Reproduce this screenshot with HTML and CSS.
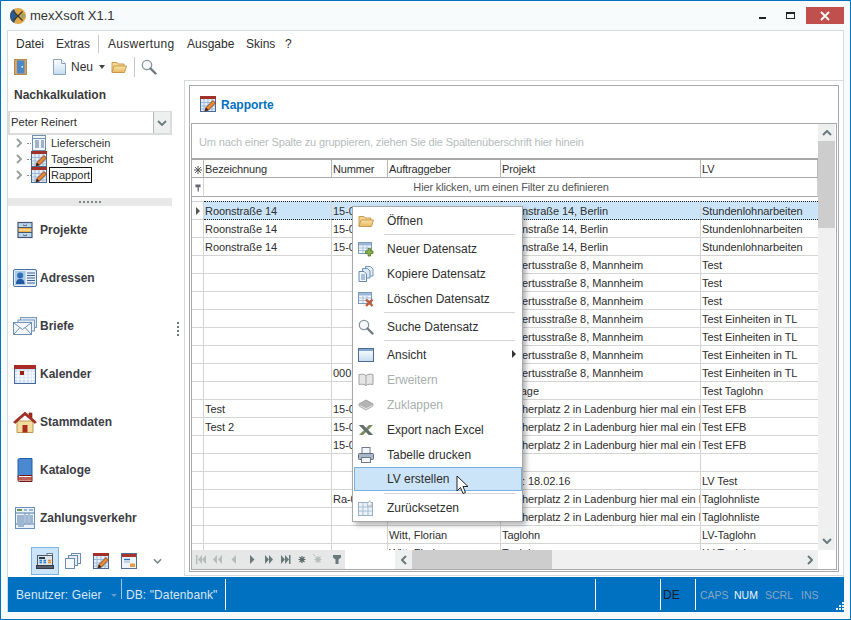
FILE: index.html
```html
<!DOCTYPE html>
<html lang="de">
<head>
<meta charset="utf-8">
<title>mexXsoft X1.1</title>
<link rel="stylesheet" href="styles.css">
</head>
<body>
<svg class="sprite" width="0" height="0" aria-hidden="true">
  <defs>
    <linearGradient id="gDoc" x1="0" y1="0" x2="0" y2="1"><stop offset="0" stop-color="#fff"/><stop offset="1" stop-color="#c4dcf0"/></linearGradient>
    <linearGradient id="gFold" x1="0" y1="0" x2="0" y2="1"><stop offset="0" stop-color="#fbe3a8"/><stop offset="1" stop-color="#e8b860"/></linearGradient>
    <symbol id="i-door" viewBox="0 0 16 16"><rect x="1.500" y="0.500" width="12" height="15" fill="#d7a468" stroke="#b98a50"/><rect x="4" y="1.500" width="7.500" height="13" fill="#4a88c8"/><rect x="8.500" y="7" width="1.500" height="1.500" fill="#fff"/></symbol>
    <symbol id="i-doc" viewBox="0 0 16 16"><path d="M2.500.5h8l4 4v11h-12z" fill="url(#gDoc)" stroke="#8aa4c0"/><path d="M10.500.5v4h4" fill="#fff" stroke="#8aa4c0"/></symbol>
    <symbol id="i-folder" viewBox="0 0 16 16"><path d="M1 13V3.500h5l1 1.500h6v2" fill="#f6d690" stroke="#c89a50"/><path d="M1 13.500l2-6.500h12.500l-2 6.500z" fill="url(#gFold)" stroke="#c89a50"/></symbol>
    <symbol id="i-search" viewBox="0 0 16 16"><circle cx="6" cy="6" r="4.700" fill="#f4f8fb" stroke="#8a949c" stroke-width="1.300"/><path d="M9.500 9.500l5 5" stroke="#707a82" stroke-width="2.400" stroke-linecap="round"/></symbol>
    <symbol id="i-form" viewBox="0 0 16 16"><rect x="1.500" y="0.500" width="13" height="15" fill="#f2f7fc" stroke="#6f8fb0"/><path d="M1.500 3.500h13" stroke="#6f8fb0"/><path d="M4 6h4M4 8h4M4 10h4M4 12h4M10 6h3M10 8h3M10 10h3M10 12h3" stroke="#4e6f92"/></symbol>
    <symbol id="i-rapport" viewBox="0 0 16 16"><rect x="0.500" y="0.500" width="15" height="15" fill="#e4eef8" stroke="#4a6a94"/><rect x="0" y="0" width="16" height="3" fill="#a03028"/><path d="M4 3v12M8 3v12M12 3v12M1 6.500h14M1 10h14M1 13h14" stroke="#9db9d8"/><path d="M5 15l1-3.500 7-7 2.500 2.500-7 7z" fill="#e88a30" stroke="#70301c" stroke-width=".8"/><path d="M5 15l1-3.500 2.500 2.500z" fill="#3a2010"/></symbol>
    <symbol id="i-cabinet" viewBox="0 0 16 16"><rect x="1" y="0.500" width="14" height="15" fill="#bcd6ee" stroke="#46566e" stroke-width="1.200"/><path d="M1 5.500h14M1 10.500h14" stroke="#46566e"/><rect x="2" y="6" width="12" height="4" fill="#f0b040"/><rect x="2" y="7.500" width="12" height="1" fill="#fff2c8"/><path d="M6.500 2.500v1h3v-1M6.500 12.500v1h3v-1" fill="none" stroke="#46566e" stroke-width=".8"/></symbol>
    <symbol id="i-card" viewBox="0 0 24 18"><rect x="0.500" y="0.500" width="23" height="17" rx="1.500" fill="#e6f0fa" stroke="#4a72a8"/><rect x="2" y="2" width="10.500" height="14" fill="#a9c9ea"/><circle cx="7.200" cy="6.500" r="3" fill="#2f6eb5"/><path d="M3 15c0-4 2-5 4.200-5s4.300 1 4.300 5z" fill="#2458a0"/><path d="M14 4h8M14 6.500h8M14 9h8M14 11.500h8M14 14h8" stroke="#3a5f90"/></symbol>
    <symbol id="i-mails" viewBox="0 0 24 18"><rect x="7.500" y="0.500" width="16" height="10" fill="#dfeaf6" stroke="#7898bc"/><rect x="5" y="3" width="16.500" height="11" fill="#e6eff8" stroke="#7898bc"/><rect x="0.500" y="5.500" width="18" height="12" fill="#f4f8fc" stroke="#7090b4"/><path d="M1 6l8.500 6.500L18 6M1 17l6-6.500M18 17l-6-6.500" fill="none" stroke="#7090b4"/></symbol>
    <symbol id="i-cal" viewBox="0 0 22 19"><rect x="0.500" y="0.500" width="21" height="18" fill="#cfe0f2" stroke="#46689a"/><rect x="0" y="0" width="22" height="4" fill="#a82c24"/><path d="M4 5v13M8 5v13M12 5v13M16 5v13M19 5v13M1 8h20M1 11h20M1 14h20" stroke="#fff"/><rect x="6" y="6" width="4" height="4" fill="#a01c18"/></symbol>
    <symbol id="i-house" viewBox="0 0 24 22"><path d="M4 10h16v11.500H4z" fill="#f4dc9c" stroke="#b89858"/><path d="M0.500 11L12 1l4 3.500V2h3v5.200L23.500 11l-1.500 1.500L12 4 2 12.500z" fill="#a82c20" stroke="#7a1c14" stroke-width=".6"/><rect x="9.500" y="14" width="5" height="7.500" fill="#a82c20"/></symbol>
    <symbol id="i-book" viewBox="0 0 16 24"><path d="M1 2q0-1.500 1.500-1.500H15v17H2.500Q1 17.500 1 19z" fill="#4a88d0" stroke="#1f5ea8"/><path d="M1 19v3.500q0 1 1.500 1H15v-6H2.500Q1 17.500 1 19z" fill="#fff" stroke="#701814"/><path d="M1 20h14M1 21.800h14" stroke="#a82c24" stroke-width="1.300"/></symbol>
    <symbol id="i-ledger" viewBox="0 0 20 22"><rect x="0.500" y="0.500" width="19" height="21" fill="#eaf2fb" stroke="#6a90ba"/><path d="M2 3h5" stroke="#6a9a50" stroke-width="2"/><path d="M9 3h3M14 3h4M1 6h18M2 9h7M2 11h7M2 13h7M2 15h7M11 9h2M11 11h2M11 13h2M11 15h2M15 9h3M15 11h3M15 13h3M15 15h3M1 17h18M3 19h6" stroke="#557ba6"/><path d="M10 6v11M14 6v11" stroke="#6a90ba"/></symbol>
    <symbol id="i-register" viewBox="0 0 18 16"><rect x="11" y="0.500" width="5.500" height="5" fill="#f8fbfe" stroke="#6a7a8c"/><rect x="1.500" y="2.500" width="15" height="10" fill="#dde4ea" stroke="#4c5864"/><rect x="3" y="4" width="6" height="2" fill="#2b3a48"/><path d="M3.500 7.500h2.500M7.500 7.500h2.500M3.500 9.500h2.500M7.500 9.500h2.500" stroke="#2e7ed0" stroke-width="1.300"/><path d="M12 7.500h3M12 9.500h3" stroke="#e09030" stroke-width="1.300"/><rect x="0.500" y="12.500" width="17" height="3" fill="#56606c" stroke="#333c46"/></symbol>
    <symbol id="i-copies" viewBox="0 0 16 16"><rect x="6.500" y="0.500" width="9" height="10" fill="#eef4fa" stroke="#6c8cb0"/><rect x="3.500" y="2.500" width="9" height="10" fill="#e6eff8" stroke="#6c8cb0"/><rect x="0.500" y="5.500" width="9" height="10" fill="#f6fafd" stroke="#6c8cb0"/></symbol>
    <symbol id="i-win" viewBox="0 0 16 16"><rect x="0.500" y="0.500" width="15" height="15" fill="#edf4fb" stroke="#4f6f96"/><rect x="1" y="1" width="14" height="3" fill="#a8342c"/><path d="M3 6.500h6" stroke="#2e74c4" stroke-width="1.400"/><path d="M3 9h6" stroke="#9ab0c8"/><rect x="9" y="10.500" width="5" height="3.500" fill="#e4a040"/></symbol>
    <symbol id="i-tplus" viewBox="0 0 16 16"><rect x="0.500" y="1.500" width="13" height="11" fill="#f2f7fc" stroke="#7e9ab8"/><rect x="1" y="2" width="12" height="2.500" fill="#9ab8d8"/><path d="M5 5v7M9 5v7M1 7h12M1 9.500h12" stroke="#a8c0d8"/><path d="M10 7.500h2.500V10H15v2.500h-2.500V15H10v-2.500H7.500V10H10z" fill="#8cb04c" stroke="#547828" stroke-width=".8"/></symbol>
    <symbol id="i-tcopy" viewBox="0 0 16 16"><path d="M7.500 0.500h5l2.500 2.500v7h-7.500z" fill="#e6eff8" stroke="#7294ba"/><path d="M4.500 2.500h5l2.500 2.500v7h-7.500z" fill="#dbe8f5" stroke="#7294ba"/><path d="M1 5.500h5l2.500 2.500v7.500H1z" fill="#f2f7fc" stroke="#6488b0"/><path d="M3 9h4M3 11h4M3 13h4" stroke="#6488b0"/></symbol>
    <symbol id="i-tx" viewBox="0 0 16 16"><rect x="0.500" y="1.500" width="13" height="11" fill="#f2f7fc" stroke="#7e9ab8"/><rect x="1" y="2" width="12" height="2.500" fill="#9ab8d8"/><path d="M5 5v7M9 5v7M1 7h12M1 9.500h12" stroke="#a8c0d8"/><path d="M8 8.500l6.500 6.500M14.500 8.500L8 15" stroke="#c05a38" stroke-width="2.400"/></symbol>
    <symbol id="i-panel" viewBox="0 0 16 14"><rect x="0.500" y="0.500" width="15" height="13" fill="url(#gDoc)" stroke="#4f6a8c"/><rect x="1" y="1" width="14" height="2" fill="#7fa6d0"/></symbol>
    <symbol id="i-bookopen" viewBox="0 0 16 14"><path d="M8 2.500C6 1 3.500 1 1 1.500v10c2.500-.5 5-.5 7 1 2-1.500 4.500-1.500 7-1V1.500C12.500 1 10 1 8 2.500z" fill="#e6e6e6" stroke="#a0a0a0"/><path d="M8 2.500v10" stroke="#a0a0a0"/></symbol>
    <symbol id="i-bookshut" viewBox="0 0 16 12"><path d="M8 1L1 5l7 3.500L15 5z" fill="#b4b4b4" stroke="#a0a0a0"/><path d="M1 5v2l7 4 7-4V5L8 8.500z" fill="#dcdcdc" stroke="#b0b0b0"/></symbol>
    <symbol id="i-excel" viewBox="0 0 16 12"><path d="M1 1h4l3 3 3-3h4l-5 5 5 5h-4L8 8l-3 3H1l5-5z" fill="#7a8a5c"/><path d="M1 1h4l10 10h-4z" fill="#5f6f70"/></symbol>
    <symbol id="i-printer" viewBox="0 0 16 16"><rect x="4" y="0.500" width="8" height="6" fill="#f4f7fa" stroke="#6e7c8c"/><rect x="0.500" y="6.500" width="15" height="6" rx="1" fill="#a8b8ca" stroke="#5c6a7a"/><rect x="3.500" y="10.500" width="9" height="5" fill="#f4f7fa" stroke="#6e7c8c"/></symbol>
    <symbol id="i-reset" viewBox="0 0 16 16"><rect x="0.500" y="2.500" width="14" height="13" fill="#edf2f8" stroke="#9ab0c8"/><path d="M5 3v12M10 3v12M1 7h13M1 11h13" stroke="#a8bed4"/><path d="M11.500 0.500l1 2 2.200.300-1.600 1.500.400 2.200-2-1-2 1 .400-2.200-1.600-1.500 2.200-.300z" fill="#f6f8fa" stroke="#9aa8b6" stroke-width=".7"/></symbol>
    <symbol id="i-chev" viewBox="0 0 7 10"><path d="M1 1l4 4-4 4" fill="none" stroke="#9aa0a0" stroke-width="2"/></symbol>
  </defs>
</svg>

<div class="window">
  <header class="titlebar">
    <svg class="app-logo" viewBox="0 0 16 16"><circle cx="8" cy="8" r="8" fill="#e0a848"/><path d="M0 8a8 8 0 0 1 4-7l3 7-3 7a8 8 0 0 1-4-7z" fill="#2c5a90"/><path d="M4 3l4 4 4-4 1 1-4 4 4 4-1 1-4-4-4 4-1-1 4-4-4-4z" fill="#3c3c30"/><circle cx="13" cy="8" r="2.200" fill="#98a468"/></svg>
    <span class="app-title">mexXsoft X1.1</span>
    <div class="win-btns">
      <span class="win-min"></span>
      <span class="win-max"></span>
      <span class="win-close"><svg width="10" height="10" viewBox="0 0 10 10"><path d="M1 1l8 8M9 1l-8 8" stroke="#fff" stroke-width="1.800"/></svg></span>
    </div>
  </header>

  <div class="client">
    <div class="topbars">
      <nav class="menubar">
        <span class="m m-datei">Datei</span>
        <span class="m m-extras">Extras</span>
        <span class="vsep menu-sep"></span>
        <span class="m m-ausw">Auswertung</span>
        <span class="m m-ausg">Ausgabe</span>
        <span class="m m-skins">Skins</span>
        <span class="m">?</span>
      </nav>
      <div class="toolbar">
        <svg class="ic16 tb-door"><use href="#i-door"/></svg>
        <svg class="ic16 tb-doc"><use href="#i-doc"/></svg>
        <span class="tb-neu">Neu</span>
        <span class="tb-caret"></span>
        <svg class="ic16 tb-folder"><use href="#i-folder"/></svg>
        <span class="vsep tb-sep"></span>
        <svg class="ic16 tb-search"><use href="#i-search"/></svg>
      </div>
    </div>

    <div class="workarea">
      <aside class="side">
        <h2 class="side-head">Nachkalkulation</h2>
        <div class="combo"><span class="combo-val">Peter Reinert</span><span class="combo-btn"><svg width="10" height="6" viewBox="0 0 10 6"><path d="M1 1l4 4 4-4" fill="none" stroke="#6a7a7a" stroke-width="1.800"/></svg></span></div>
        <ul class="tree">
          <li><svg class="tree-chev"><use href="#i-chev"/></svg><span class="tree-dots"></span><svg class="ic16"><use href="#i-form"/></svg><span class="tree-label">Lieferschein</span></li>
          <li><svg class="tree-chev"><use href="#i-chev"/></svg><span class="tree-dots"></span><svg class="ic16"><use href="#i-rapport"/></svg><span class="tree-label">Tagesbericht</span></li>
          <li><svg class="tree-chev"><use href="#i-chev"/></svg><span class="tree-dots"></span><svg class="ic16"><use href="#i-rapport"/></svg><span class="tree-label tree-focus">Rapport</span></li>
        </ul>
        <div class="splitter"><span></span><span></span><span></span><span></span><span></span><span></span></div>
        <ul class="navlist">
          <li><span class="nav-ic"><svg class="n16"><use href="#i-cabinet"/></svg></span>Projekte</li>
          <li><span class="nav-ic"><svg class="n24"><use href="#i-card"/></svg></span>Adressen</li>
          <li><span class="nav-ic"><svg class="n24"><use href="#i-mails"/></svg></span>Briefe<span class="grip"><i></i><i></i><i></i><i></i></span></li>
          <li><span class="nav-ic"><svg class="n22"><use href="#i-cal"/></svg></span>Kalender</li>
          <li><span class="nav-ic"><svg class="n24h"><use href="#i-house"/></svg></span>Stammdaten</li>
          <li><span class="nav-ic"><svg class="n16t"><use href="#i-book"/></svg></span>Kataloge</li>
          <li><span class="nav-ic"><svg class="n20"><use href="#i-ledger"/></svg></span>Zahlungsverkehr</li>
        </ul>
        <div class="navbtns">
          <span class="nb nb-on"><svg class="ic16 wide"><use href="#i-register"/></svg></span>
          <span class="nb"><svg class="ic16"><use href="#i-copies"/></svg></span>
          <span class="nb"><svg class="ic16"><use href="#i-rapport"/></svg></span>
          <span class="nb"><svg class="ic16"><use href="#i-win"/></svg></span>
          <span class="nb"><svg width="9" height="6" viewBox="0 0 10 6"><path d="M1 1l4 4 4-4" fill="none" stroke="#7a8a8a" stroke-width="1.800"/></svg></span>
        </div>
      </aside>

      <main class="main">
        <section class="frame">
          <div class="frame-title"><svg class="ic16"><use href="#i-rapport"/></svg><span>Rapporte</span></div>
          <div class="grid">
            <div class="grid-top">
              <div class="grid-left">
                <div class="group-panel">Um nach einer Spalte zu gruppieren, ziehen Sie die Spaltenüberschrift hier hinein</div>
                <table class="tbl">
                  <colgroup><col class="c0"><col class="c1"><col class="c2"><col class="c3"><col class="c4"><col class="c5"></colgroup>
                  <thead>
                    <tr class="hdr"><th><svg width="8" height="8" viewBox="0 0 9 9"><path d="M4.500 0v9M0 4.500h9M1.200 1.200l6.600 6.600M7.800 1.200L1.200 7.800" stroke="#555" stroke-width="1.100"/></svg></th><th>Bezeichnung</th><th>Nummer</th><th>Auftraggeber</th><th>Projekt</th><th>LV</th></tr>
                    <tr class="flt"><th><svg width="6" height="8" viewBox="0 0 7 9"><path d="M0.500 0.500h6v3h-2v5h-1.500v-5h-2.500z" fill="#667"/></svg></th><th colspan="5">Hier klicken, um einen Filter zu definieren</th></tr>
                    <tr class="gap"><td colspan="6"></td></tr>
                  </thead>
                  <tbody>
                    <tr class="sel"><td class="ind"><span class="tri"></span></td><td>Roonstraße 14</td><td>15-0001</td><td></td><td>Roonstraße 14, Berlin</td><td>Stundenlohnarbeiten</td></tr>
                    <tr><td class="ind"></td><td>Roonstraße 14</td><td>15-0002</td><td></td><td>Roonstraße 14, Berlin</td><td>Stundenlohnarbeiten</td></tr>
                    <tr><td class="ind"></td><td>Roonstraße 14</td><td>15-0003</td><td></td><td>Roonstraße 14, Berlin</td><td>Stundenlohnarbeiten</td></tr>
                    <tr><td class="ind"></td><td></td><td></td><td></td><td>Hubertusstraße 8, Mannheim</td><td>Test</td></tr>
                    <tr><td class="ind"></td><td></td><td></td><td></td><td>Hubertusstraße 8, Mannheim</td><td>Test</td></tr>
                    <tr><td class="ind"></td><td></td><td></td><td></td><td>Hubertusstraße 8, Mannheim</td><td>Test</td></tr>
                    <tr><td class="ind"></td><td></td><td></td><td></td><td>Hubertusstraße 8, Mannheim</td><td>Test Einheiten in TL</td></tr>
                    <tr><td class="ind"></td><td></td><td></td><td></td><td>Hubertusstraße 8, Mannheim</td><td>Test Einheiten in TL</td></tr>
                    <tr><td class="ind"></td><td></td><td></td><td></td><td>Hubertusstraße 8, Mannheim</td><td>Test Einheiten in TL</td></tr>
                    <tr><td class="ind"></td><td></td><td>0001</td><td></td><td>Hubertusstraße 8, Mannheim</td><td>Test Einheiten in TL</td></tr>
                    <tr><td class="ind"></td><td></td><td></td><td></td><td>Vorlage</td><td>Test Taglohn</td></tr>
                    <tr><td class="ind"></td><td>Test</td><td>15-0004</td><td></td><td>Fischerplatz 2 in Ladenburg hier mal ein langer Text</td><td>Test EFB</td></tr>
                    <tr><td class="ind"></td><td>Test 2</td><td>15-0005</td><td></td><td>Fischerplatz 2 in Ladenburg hier mal ein langer Text</td><td>Test EFB</td></tr>
                    <tr><td class="ind"></td><td></td><td>15-0006</td><td></td><td>Fischerplatz 2 in Ladenburg hier mal ein langer Text</td><td>Test EFB</td></tr>
                    <tr><td class="ind"></td><td></td><td></td><td></td><td></td><td></td></tr>
                    <tr><td class="ind"></td><td></td><td></td><td></td><td>Test: 18.02.16</td><td>LV Test</td></tr>
                    <tr><td class="ind"></td><td></td><td>Ra-0001</td><td></td><td>Fischerplatz 2 in Ladenburg hier mal ein langer Text</td><td>Taglohnliste</td></tr>
                    <tr><td class="ind"></td><td></td><td></td><td></td><td>Fischerplatz 2 in Ladenburg hier mal ein langer Text</td><td>Taglohnliste</td></tr>
                    <tr><td class="ind"></td><td></td><td></td><td>Witt, Florian</td><td>Taglohn</td><td>LV-Taglohn</td></tr>
                    <tr><td class="ind"></td><td></td><td></td><td>Witt, Florian</td><td>Taglohn</td><td>LV-Taglohn</td></tr>
                  </tbody>
                </table>
              </div>
              <div class="vscroll">
                <span class="sb-btn"><svg width="10" height="6" viewBox="0 0 10 6"><path d="M1 5l4-4 4 4" fill="none" stroke="#6a7a80" stroke-width="2"/></svg></span>
                <span class="v-thumb"></span>
                <span class="sb-track"></span>
                <span class="sb-btn"><svg width="10" height="6" viewBox="0 0 10 6"><path d="M1 1l4 4 4-4" fill="none" stroke="#6a7a80" stroke-width="2"/></svg></span>
              </div>
            </div>
            <div class="grid-foot">
              <div class="pager">
                <svg width="153" height="19" viewBox="0 0 153 19">
                  <g fill="#b4bcbc"><rect x="4" y="5" width="1.500" height="9"/><path d="M10 5v9l-4-4.500zM14 5v9l-4-4.500z"/><path d="M25 5v9l-4-4.500zM30 5v9l-4-4.500z"/><path d="M44 5v9l-4.500-4.500z"/></g>
                  <g fill="#6a7a7a"><path d="M58 5v9l4.500-4.500z"/><path d="M73 5v9l4-4.500zM77 5v9l4-4.500z"/><path d="M89 5v9l4-4.500zM93 5v9l4-4.500z"/><rect x="97" y="5" width="1.500" height="9"/></g>
                  <path d="M110 6v7M106.500 9.500h7M107.500 7l5 5M112.500 7l-5 5" stroke="#5a6a6a" stroke-width="1.200"/>
                  <path d="M126 6v7M122.500 9.500h7M123.500 7l5 5M128.500 7l-5 5" stroke="#b4bcbc" stroke-width="1.200"/><path d="M121 4l2 2" stroke="#b4bcbc"/>
                  <path d="M141 5h8v2.500l-2.500 2v4.500h-3V9.500l-2.500-2z" fill="#6a7a7a"/>
                </svg>
              </div>
              <div class="hscroll">
                <span class="h-btn"><svg width="6" height="10" viewBox="0 0 6 10"><path d="M5 1L1 5l4 4" fill="none" stroke="#6a7a80" stroke-width="2"/></svg></span>
                <span class="h-thumb"></span>
                <span class="sb-track h-track"></span>
                <span class="h-btn"><svg width="6" height="10" viewBox="0 0 6 10"><path d="M1 1l4 4-4 4" fill="none" stroke="#6a7a80" stroke-width="2"/></svg></span>
              </div>
              <span class="corner"></span>
            </div>
          </div>
        </section>
      </main>
    </div>

    <footer class="status">
      <span class="st st-user">Benutzer: Geier<i class="st-caret"></i></span>
      <span class="st-sep faint"></span>
      <span class="st st-db">DB: "Datenbank"</span>
      <span class="st-sep"></span>
      <span class="st st-blank1"></span>
      <span class="st-sep"></span>
      <span class="st st-blank2"></span>
      <span class="st-sep"></span>
      <span class="st st-de">DE</span>
      <span class="st-sep"></span>
      <span class="st key k1">CAPS</span>
      <span class="st key on k2">NUM</span>
      <span class="st key k3">SCRL</span>
      <span class="st key k4">INS</span>
      <svg class="st-grip" width="9" height="9" viewBox="0 0 9 9"><path d="M7 1h2v2H7zM4 4h2v2H4zM7 4h2v2H7zM1 7h2v2H1zM4 7h2v2H4zM7 7h2v2H7z" fill="#e4eef8"/></svg>
    </footer>
  </div>

  <div class="ctx">
    <div class="ci"><svg class="mi"><use href="#i-folder"/></svg>Öffnen</div>
    <div class="cs"></div>
    <div class="ci"><svg class="mi"><use href="#i-tplus"/></svg>Neuer Datensatz</div>
    <div class="ci"><svg class="mi"><use href="#i-tcopy"/></svg>Kopiere Datensatz</div>
    <div class="ci"><svg class="mi"><use href="#i-tx"/></svg>Löschen Datensatz</div>
    <div class="cs"></div>
    <div class="ci"><svg class="mi"><use href="#i-search"/></svg>Suche Datensatz</div>
    <div class="cs"></div>
    <div class="ci"><svg class="mi"><use href="#i-panel"/></svg>Ansicht<span class="sub"></span></div>
    <div class="ci off"><svg class="mi"><use href="#i-bookopen"/></svg>Erweitern</div>
    <div class="ci off"><svg class="mi"><use href="#i-bookshut"/></svg>Zuklappen</div>
    <div class="ci"><svg class="mi"><use href="#i-excel"/></svg>Export nach Excel</div>
    <div class="ci"><svg class="mi"><use href="#i-printer"/></svg>Tabelle drucken</div>
    <div class="ci hot"><span class="mi"></span>LV erstellen</div>
    <div class="cs"></div>
    <div class="ci"><svg class="mi"><use href="#i-reset"/></svg>Zurücksetzen</div>
  </div>
  <svg class="pointer" width="14" height="20" viewBox="0 0 14 20"><path d="M1 1v15l3.500-3.500 2.500 6 2.500-1-2.500-6H12z" fill="#fff" stroke="#222"/></svg>
</div>
</body>
</html>
```

FILE: styles.css
```css
* { box-sizing: border-box; }
html, body { margin: 0; padding: 0; }
body {
  width: 851px; height: 620px; overflow: hidden;
  font: 12px/14px "Liberation Sans", Arial, sans-serif;
  color: #2e2e2e;
  background: #f8fbfb;
}
ul { list-style: none; margin: 0; padding: 0; }
.sprite { position: absolute; }
.ic16 { width: 16px; height: 16px; display: block; flex: none; }

.window {
  position: relative;
  width: 851px; height: 620px;
  border: 1px solid #0072c6;
  display: flex; flex-direction: column;
  padding: 0 6px 7px;
}

/* title bar */
.titlebar { height: 29px; flex: none; display: flex; align-items: center; padding-left: 3px; }
.app-logo { width: 16px; height: 16px; margin-top: 1px; }
.app-title { margin-left: 4px; font-size: 13px; color: #333; margin-top: 1px; }
.win-btns { margin-left: auto; display: flex; align-items: flex-start; height: 29px; }
.win-min { width: 7px; height: 2px; background: #222; margin-top: 16px; }
.win-max { width: 9px; height: 7px; border: 1px solid #222; border-top-width: 2px; margin: 11px 0 0 20px; }
.win-close { width: 38px; height: 17px; background: #c0504d; margin: 6px 0 0 11px; display: flex; align-items: center; justify-content: center; }

/* client */
.client { flex: 1; display: flex; flex-direction: column; background: #fff; border: 1px solid #d6dada; border-width: 1px 1px 0 1px; min-height: 0; }
.topbars { height: 49px; flex: none; }
.menubar { display: flex; align-items: center; height: 23px; padding: 2px 0 0 8px; }
.m-datei { width: 40px; }
.m-extras { width: 42px; }
.vsep { width: 1px; background: #c4c8c8; display: block; flex: none; }
.menu-sep { height: 18px; }
.m-ausw { margin-left: 9px; width: 79px; letter-spacing: .3px; }
.m-ausg { width: 59px; }
.m-skins { width: 39px; }
.toolbar { display: flex; align-items: center; height: 24px; padding: 2px 0 0 5px; }
.tb-doc { margin-left: 22px; }
.tb-neu { margin-left: 4px; width: 28px; }
.tb-caret { width: 0; height: 0; border: 3px solid transparent; border-top: 4px solid #444; border-bottom: 0; }
.tb-folder { margin-left: 6px; }
.tb-sep { height: 20px; margin: 0 6px 0 7px; }

.workarea { flex: 1; display: flex; min-height: 0; }

/* side */
.side { width: 176px; flex: none; display: flex; flex-direction: column; }
.side-head { margin: 8px 0 0 6px; font-size: 12px; line-height: 14px; font-weight: 700; color: #3a3a3a; }
.combo { margin-top: 9px; width: 164px; height: 24px; display: flex; border: 2px solid #dcdcdc; border-top-width: 1px; background: #fff; font-size: 11.2px; }
.combo-val { flex: 1; padding: 3px 0 0 1px; }
.combo-btn { width: 17px; border-left: 1px solid #b8b8b8; background: #eef0f0; display: flex; align-items: center; justify-content: center; }
.tree li { height: 16px; display: flex; align-items: center; padding-left: 8px; font-size: 11px; }
.tree-chev { width: 7px; height: 10px; flex: none; }
.tree-dots { width: 4px; margin-left: 4px; border-top: 1px dotted #888; flex: none; }
.tree-label { margin-left: 2px; padding: 0 1px; line-height: 14px; height: 16px; border: 1px solid transparent; }
.tree-focus { border-color: #111; }
.splitter { margin-top: 15px; width: 164px; height: 8px; background: #e8e8e8; display: flex; justify-content: center; align-items: center; gap: 2px; }
.splitter span { width: 2px; height: 2px; background: #7a8a8a; }
.navlist li { height: 48px; display: flex; align-items: center; font-weight: 700; color: #3c3c44; }
.nav-ic { width: 32px; flex: none; display: flex; justify-content: center; padding-left: 2px; }
.n16 { width: 16px; height: 22px; }
.n24 { width: 24px; height: 18px; }
.n22 { width: 22px; height: 19px; }
.n24h { width: 24px; height: 22px; }
.n16t { width: 16px; height: 24px; }
.n20 { width: 20px; height: 22px; }
.grip { margin-left: auto; margin-right: 5px; display: flex; flex-direction: column; gap: 2px; margin-top: 6px; }
.grip i { width: 2px; height: 2px; background: #6a7a7a; display: block; }
.navbtns { margin: 5px 0 0 23px; display: flex; height: 28px; }
.nb { width: 28px; height: 28px; display: flex; align-items: center; justify-content: center; }
.nb-on { background: #cce4f7; border: 1px solid #7ab5e5; }
.wide { width: 18px; height: 16px; }

/* main */
.main { flex: 1; height: 496px; border: 1px solid #d6dada; padding: 4px; }
.frame { width: 650px; height: 487px; border: 1px solid #a8a8a8; padding: 0 1px 1px; display: flex; flex-direction: column; }
.frame-title { height: 37px; flex: none; display: flex; align-items: center; padding: 0 0 2px 9px; }
.frame-title span { margin: 2px 0 0 5px; font-weight: 700; color: #0070c0; }
.grid { height: 447px; border: 1px solid #a8a8a8; display: flex; flex-direction: column; }
.grid-top { height: 426px; flex: none; display: flex; }
.grid-left { width: 626px; overflow: hidden; }
.group-panel { height: 36px; padding: 11px 0 0 7px; color: #b4bcbc; white-space: nowrap; border-bottom: 2px solid #a8a8a8; font-size: 11px; letter-spacing: -.15px; }

.tbl { table-layout: fixed; border-collapse: separate; border-spacing: 0; width: 626px; font-size: 11px; letter-spacing: -.05px; }
.c0 { width: 12px; } .c1 { width: 128px; } .c2 { width: 56px; } .c3 { width: 113px; } .c4 { width: 200px; } .c5 { width: 117px; }
.tbl th, .tbl td { padding: 0 0 0 1px; font-weight: 400; text-align: left; white-space: nowrap; overflow: hidden; border-right: 1px solid #d4d4d4; border-bottom: 1px solid #d4d4d4; height: 18px; }
.tbl th { letter-spacing: -.15px; }
.hdr th { border-right-color: #b8b8b8; border-bottom-color: #a8a8a8; }
.hdr th:first-child, .flt th:first-child { padding: 0; text-align: center; }
.hdr svg, .flt svg { display: inline-block; vertical-align: middle; }
.flt th { height: 19px; border-bottom-color: #a8a8a8; border-right-color: #d4d4d4; color: #555; text-align: center; }
.tbl .gap td { height: 4px; padding: 0; border: 0; line-height: 0; font-size: 0; }
.tbl td:last-child { border-right: 0; }
.tbl .sel td { height: 19px; border-top: 1px dotted #222; border-bottom: 1px dotted #222; background: #cce4f7; }
.tbl .sel .ind { background: #fff; border-top: 1px solid #d4d4d4; border-bottom: 1px solid #d4d4d4; }
.tri { display: block; width: 0; height: 0; margin-left: 3px; border: 4px solid transparent; border-left: 4px solid #555; border-right: 0; }

/* scrollbars */
.vscroll { width: 17px; flex: none; display: flex; flex-direction: column; }
.sb-btn { height: 17px; flex: none; background: #eef0f0; display: flex; align-items: center; justify-content: center; }
.vscroll .sb-btn:last-child { height: 18px; }
.v-thumb { height: 87px; flex: none; background: #cdcdcd; }
.sb-track { flex: 1; background: #f0f0f0; }
.grid-foot { height: 19px; flex: none; display: flex; }
.pager { width: 153px; flex: none; background: #e6e8e8; }
.pager svg { display: block; }
.hscroll { margin-left: 50px; width: 423px; flex: none; display: flex; }
.h-btn { width: 17px; flex: none; background: #eef0f0; display: flex; align-items: center; justify-content: center; }
.h-thumb { width: 140px; flex: none; background: #cdcdcd; }
.corner { width: 17px; background: #fff; }

/* status bar */
.status { height: 35px; flex: none; margin: 1px -1px 0 0; background: #0070c0; display: flex; align-items: center; color: #d8e6f4; letter-spacing: .1px; }
.st { display: block; flex: none; }
.st-sep { width: 1px; height: 31px; background: #fff; flex: none; }
.st-sep.faint { height: 20px; background: #9cc4e6; margin-bottom: 11px; }
.st-user { width: 113px; padding-left: 8px; position: relative; }
.st-caret { position: absolute; left: 103px; top: 6px; width: 0; height: 0; border: 3px solid transparent; border-top: 3px solid #6a9cc8; border-bottom: 0; }
.st-db { width: 103px; padding-left: 4px; white-space: nowrap; }
.st-blank1 { width: 369px; }
.st-blank2 { width: 64px; }
.st-de { width: 34px; padding-left: 2px; color: #1c1c30; }
.key { color: #8aa6c4; font-size: 10.5px; letter-spacing: 0; }
.key.on { color: #f0f6fc; }
.k1 { margin-left: 4px; width: 34px; }
.k2 { width: 31px; }
.k3 { width: 36px; }
.k4 { width: 30px; }
.st-grip { margin: auto 0 2px auto; display: block; flex: none; }

/* context menu */
.ctx {
  position: absolute; left: 351px; top: 205px;
  width: 171px; height: 316px;
  background: #fff; border: 1px solid #a4a8a8; padding: 1px 0 0 1px;
  box-shadow: 3px 3px 5px rgba(0,0,0,.3);
}
.ci { height: 25px; display: flex; align-items: center; padding-left: 4px; position: relative; }
.mi { width: 16px; height: 16px; margin-right: 13px; display: block; flex: none; }
.off { color: #a8b0b0; }
.hot { background: #cce4f7; border: 1px solid #7ab0e0; height: 24px; padding-left: 3px; margin-bottom: 1px; }
.cs { height: 3px; padding: 1px 7px 1px 30px; }
.cs::before { content: ""; display: block; height: 1px; background: #d4d4d4; }
.sub { position: absolute; left: 158px; top: 8px; width: 0; height: 0; border: 4px solid transparent; border-left: 4px solid #333; border-right: 0; }
.pointer { position: absolute; left: 455px; top: 474px; }
```
